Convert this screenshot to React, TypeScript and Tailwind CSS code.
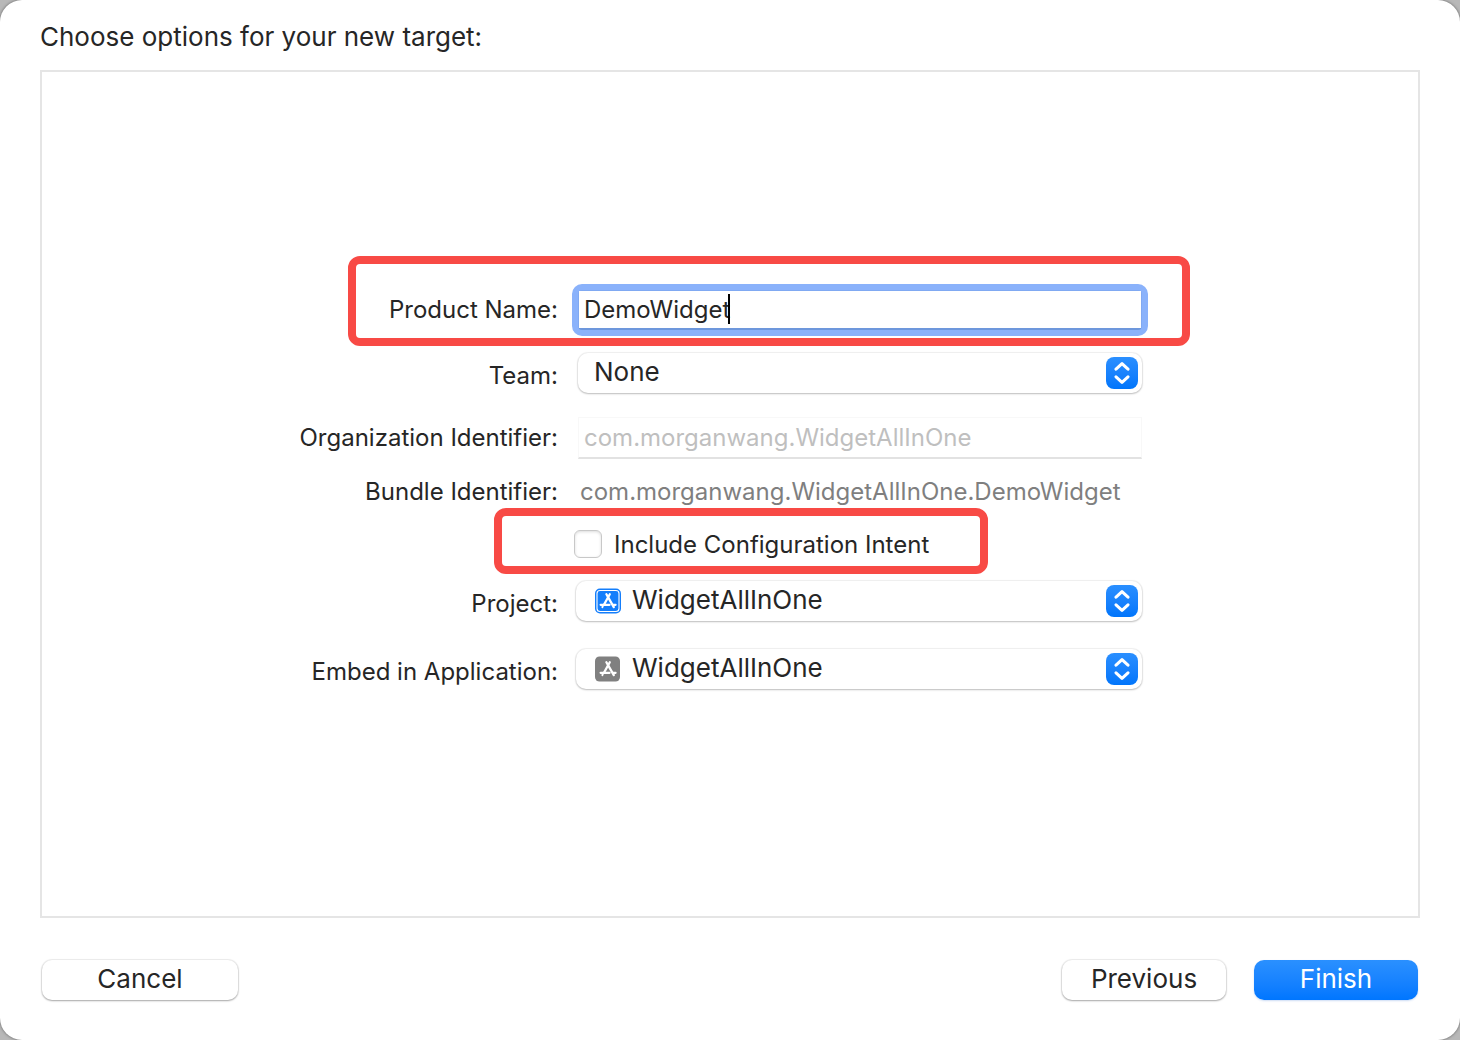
import { useState } from "react";
import type { ReactNode } from "react";

function Chevrons() {
  return (
    <span className="pointer-events-none absolute top-1 right-1 flex h-8 w-8 items-center justify-center rounded-lg bg-linear-to-b from-[#2a8fff] to-[#0075fb]">
      <svg width="16" height="24" viewBox="0 0 16 24" fill="none" stroke="#fff" strokeWidth="3" strokeLinecap="round" strokeLinejoin="round" aria-hidden="true">
        <path d="M2 8.2 8 2.6l6 5.6M2 15.8l6 5.6 6-5.6" />
      </svg>
    </span>
  );
}

function AppIcon({ framed }: { framed?: boolean }) {
  return (
    <svg className="pointer-events-none absolute top-[7px] left-[19px]" width="26" height="26" viewBox="0 0 26 26" fill="none" aria-hidden="true">
      {framed ? (
        <>
          <rect x="0" y="0.5" width="26" height="25" rx="5" fill="#147efb" />
          <rect x="2" y="2.5" width="22" height="21" rx="3" stroke="#fff" strokeWidth="1.1" />
        </>
      ) : (
        <rect x="0" y="0.5" width="25" height="25" rx="4.5" fill="#808080" />
      )}
      <g stroke="#fff" strokeLinecap="round">
        <path d="M14.8 6.2 9 16.6" strokeWidth="2.2" />
        <path d="M11.4 6.2l7.4 12.9" strokeWidth="2.3" />
        <path d="M5.6 16.8h9M18.2 16.8h2.4" strokeWidth="2.2" />
        <path d="M7.7 18.6l-.3.5" strokeWidth="2" />
      </g>
    </svg>
  );
}

function Row({ id, label, className, labelClass, children }: { id: string; label: string; className: string; labelClass?: string; children: ReactNode }) {
  return (
    <div className={"relative grid grid-cols-[288px_1fr] items-center gap-x-4 pr-12 " + className}>
      <label htmlFor={id} className={"text-right whitespace-nowrap " + (labelClass ?? "")}>{label}</label>
      {children}
    </div>
  );
}

function Popup({ id, value, icon }: { id: string; value: string; icon?: ReactNode }) {
  return (
    <div className={"relative h-10 " + (icon ? "ml-0.5" : "ml-1")}>
      <select
        id={id}
        defaultValue={value}
        className={
          "h-10 w-full appearance-none rounded-[10px] bg-white pb-0.5 text-[26px] leading-8 shadow-[0_0_1px_1px_rgba(0,0,0,0.06),0_1px_2px_rgba(0,0,0,0.22)] outline-none " +
          (icon ? "pl-14" : "pl-4")
        }
      >
        <option>{value}</option>
      </select>
      {icon}
      <Chevrons />
    </div>
  );
}

export default function App() {
  const [name, setName] = useState("DemoWidget");
  const plain = "h-10 rounded-[10px] bg-white pb-0.5 text-[26px] leading-8 shadow-[0_0_1px_1px_rgba(0,0,0,0.07),0_1px_2px_rgba(0,0,0,0.3)]";
  return (
    <div className="min-h-screen bg-[#b8b8b8] font-['Inter',sans-serif] text-[#262626]">
      <main className="flex min-h-screen flex-col rounded-[22px] bg-white px-10 pt-5 pb-10 shadow-[0_0_3px_rgba(0,0,0,0.5)]">
        <h1 className="mb-4 text-[26px] leading-[34px]">Choose options for your new target:</h1>

        <section className="flex-1 border-2 border-[#e5e5e5] pt-[218px]">
          <form className="mx-auto max-w-[920px] text-[24px] leading-8">
            <Row id="product" label="Product Name:" className="h-10">
              <div className="relative ml-1 rounded-sm outline-6 outline-[#8ab2fb]">
                <input
                  id="product"
                  value={name}
                  onChange={(e) => setName(e.target.value)}
                  className="block h-10 w-full border border-b-2 border-[#80a9f2] border-b-[#6d97dc] bg-white pl-[5px] outline-none"
                />
                <span className="absolute top-1 left-[150px] h-[30px] w-0.5 bg-black" />
              </div>
              <span className="pointer-events-none absolute -top-[34px] right-0 -bottom-4 left-[78px] rounded-xl border-8 border-[#f84a45]" />
            </Row>

            <Row id="team" label="Team:" className="mt-[23px] h-10" labelClass="pt-1.5">
              <Popup id="team" value="None" />
            </Row>

            <Row id="organization" label="Organization Identifier:" className="mt-6 h-[42px]">
              <input
                id="organization"
                disabled
                value="com.morganwang.WidgetAllInOne"
                className="ml-1 h-[42px] border border-b-2 border-[#f8f8f8] border-b-[#e2e2e2] bg-white pl-[5px] text-[#bfbfbf]"
              />
            </Row>

            <Row id="bundle" label="Bundle Identifier:" className="mt-[17px] h-8">
              <output id="bundle" className="pl-1.5 whitespace-nowrap text-[#7f7f7f]">com.morganwang.WidgetAllInOne.{name}</output>
            </Row>

            <div className="relative mt-[22px] h-7 pl-[304px]">
              <label className="flex h-7 items-center gap-3">
                <input
                  type="checkbox"
                  className="h-7 w-7 appearance-none rounded-md border border-[#c8c8c8] bg-white shadow-[inset_0_1px_3px_rgba(0,0,0,0.14)] checked:bg-[#0075fb]"
                />
                <span className="pt-0.5">Include Configuration Intent</span>
              </label>
              <span className="pointer-events-none absolute -top-[22px] -bottom-4 left-[224px] w-[494px] rounded-xl border-8 border-[#f84a45]" />
            </div>

            <Row id="project" label="Project:" className="mt-[23px] h-10" labelClass="pt-1.5">
              <Popup id="project" value="WidgetAllInOne" icon={<AppIcon framed />} />
            </Row>

            <Row id="embed" label="Embed in Application:" className="mt-7 h-10" labelClass="pt-1.5">
              <Popup id="embed" value="WidgetAllInOne" icon={<AppIcon />} />
            </Row>
          </form>
        </section>

        <footer className="mt-[42px] flex items-center">
          <button type="button" className={plain + " ml-0.5 w-[196px]"}>Cancel</button>
          <button type="button" className={plain + " mr-7 ml-auto w-[164px]"}>Previous</button>
          <button type="button" className="mr-0.5 h-10 w-[164px] rounded-[10px] bg-linear-to-b from-[#2a90ff] to-[#0076ff] pb-0.5 text-[26px] leading-8 text-white shadow-[0_1px_2px_rgba(0,80,200,0.2)]">Finish</button>
        </footer>
      </main>
    </div>
  );
}
